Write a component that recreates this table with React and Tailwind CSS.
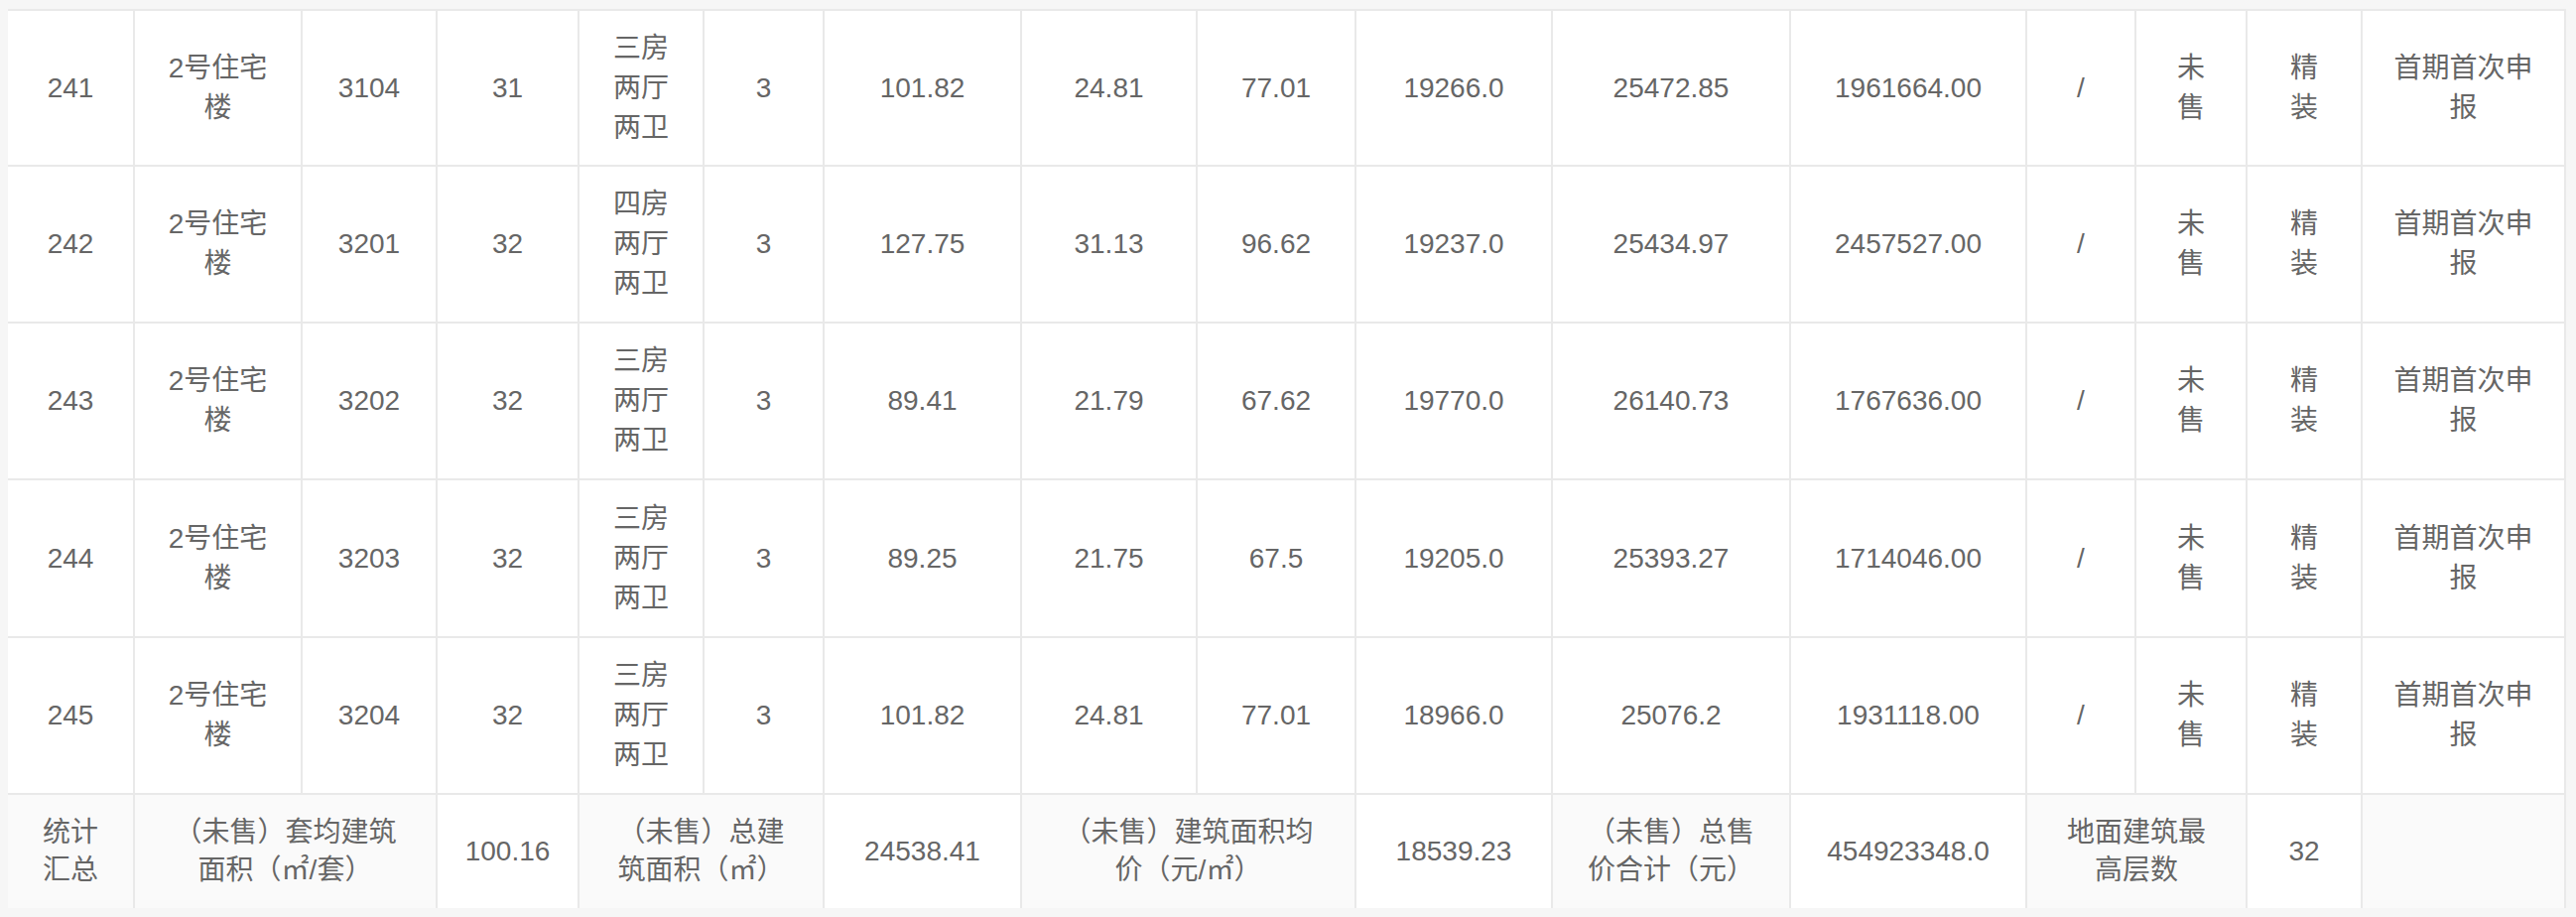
const rows = [
  ['241', '2号住宅楼', '3104', '31', '三房两厅两卫', '3', '101.82', '24.81', '77.01', '19266.0', '25472.85', '1961664.00'],
  ['242', '2号住宅楼', '3201', '32', '四房两厅两卫', '3', '127.75', '31.13', '96.62', '19237.0', '25434.97', '2457527.00'],
  ['243', '2号住宅楼', '3202', '32', '三房两厅两卫', '3', '89.41', '21.79', '67.62', '19770.0', '26140.73', '1767636.00'],
  ['244', '2号住宅楼', '3203', '32', '三房两厅两卫', '3', '89.25', '21.75', '67.5', '19205.0', '25393.27', '1714046.00'],
  ['245', '2号住宅楼', '3204', '32', '三房两厅两卫', '3', '101.82', '24.81', '77.01', '18966.0', '25076.2', '1931118.00'],
]

const tail = ['/', '未售', '精装', '首期首次申报']

function Cell({ children, className = '' }) {
  return (
    <div className={'flex items-center justify-center text-center px-[30px] leading-[40px] ' + className}>
      <span>{children}</span>
    </div>
  )
}

function Label({ children, className = '' }) {
  return (
    <div className={'flex items-center justify-center text-center px-[30px] leading-[38px] bg-[#fafafa] ' + className}>
      <span>{children}</span>
    </div>
  )
}

function Value({ children, className = '' }) {
  return (
    <div className={'flex items-center justify-center text-center px-[30px] leading-[38px] bg-white ' + className}>
      <span>{children}</span>
    </div>
  )
}

export default function App() {
  return (
    <div
      className="w-[2596px] h-[924px] bg-[#f6f6f6] pl-[8px] pt-[9px] overflow-hidden text-[28px] text-[#666666]"
      style={{ fontFamily: '"Liberation Sans", "Noto Sans CJK SC", sans-serif' }}
    >
      <div className="inline-grid grid-cols-[126px_167px_134px_141px_124px_119px_197px_175px_158px_196px_238px_236px_108px_110px_114px_203px] grid-rows-[155px_156px_156px_157px_156px_114px] gap-[2px] bg-[#e9e9e9] border-t-2 border-r-2 border-[#e9e9e9]">
        {rows.map(r => (
          [...r, ...tail].map((v, i) => (
            <Cell key={r[0] + '-' + i} className="bg-white">{v}</Cell>
          ))
        ))}

        <Label>统计汇总</Label>
        <Label className="col-span-2">（未售）套均建筑面积（㎡/套）</Label>
        <Value>100.16</Value>
        <Label className="col-span-2">（未售）总建筑面积（㎡）</Label>
        <Value>24538.41</Value>
        <Label className="col-span-2">（未售）建筑面积均价（元/㎡）</Label>
        <Value>18539.23</Value>
        <Label>（未售）总售价合计（元）</Label>
        <Value>454923348.0</Value>
        <Label className="col-span-2">地面建筑最高层数</Label>
        <Value>32</Value>
        <Label />
      </div>
    </div>
  )
}
